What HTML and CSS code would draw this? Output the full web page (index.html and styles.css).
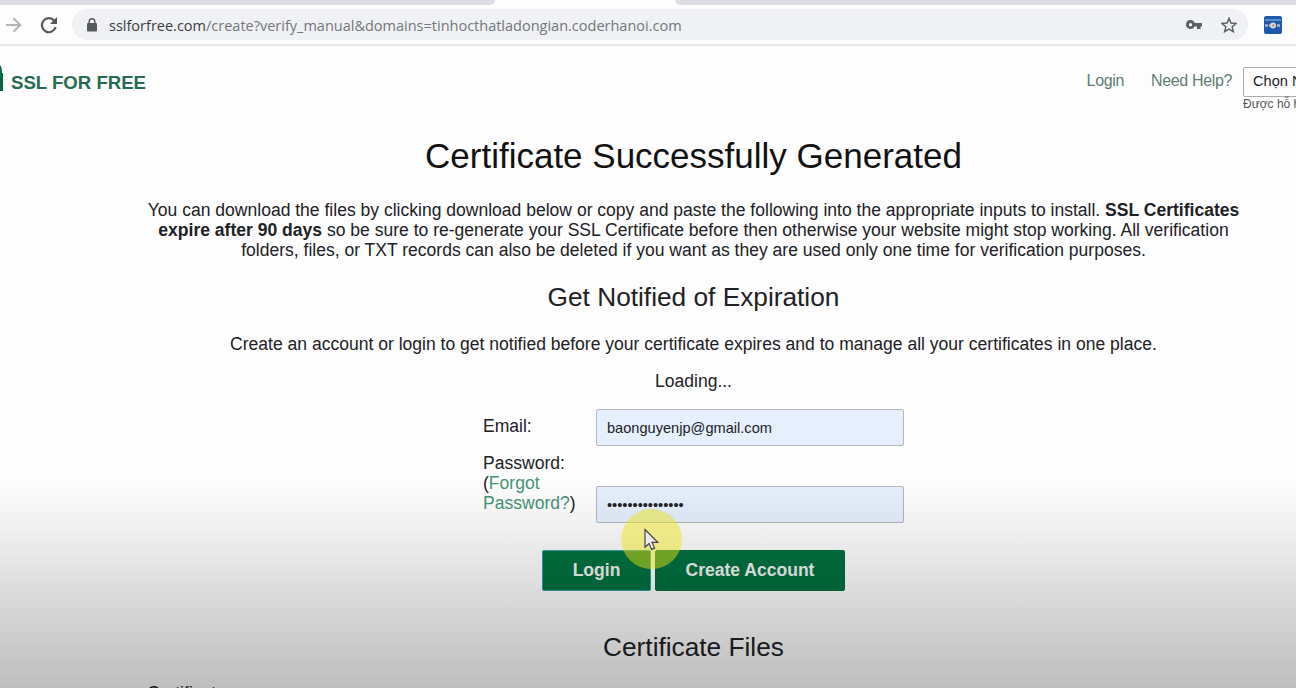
FILE: index.html
```html
<!DOCTYPE html>
<html lang="en">
<head>
<meta charset="utf-8">
<title>SSL For Free</title>
<link rel="stylesheet" href="styles.css">
</head>
<body>
<div class="screen">
  <div class="tabstrip"><div class="tab tab-left"></div><div class="tab tab-right"></div></div>
  <div class="toolbar">
    <svg class="forward" width="18" height="18" viewBox="0 0 18 18"><path d="M1 9h14M8.500 2.200L15.300 9l-6.800 6.800" fill="none" stroke="#b4b5b7" stroke-width="2"/></svg>
    <svg class="reload" width="18" height="18" viewBox="0 0 18 18"><path d="M14.300 4.700A7 7 0 1 0 15.700 11" fill="none" stroke="#55585b" stroke-width="2.200"/><path d="M17 1v7h-7z" fill="#55585b"/></svg>
    <div class="omnibox">
      <svg class="lock" width="10" height="14" viewBox="0 0 10 14"><path d="M2.200 6V3.600a2.800 2.800 0 0 1 5.600 0V6" fill="none" stroke="#57595c" stroke-width="1.500"/><rect y="5" width="10" height="8.500" rx="1" fill="#57595c"/></svg>
      <span class="url"><span class="host">sslforfree.com</span>/create?verify_manual&amp;domains=tinhocthatladongian.coderhanoi.com</span>
      <svg class="key" width="16" height="10" viewBox="0 0 16 10"><path fill-rule="evenodd" d="M4.500 0a4.500 4.500 0 0 1 4.200 3H16v3.500h-1.500V9H11V6.500H8.500A4.500 4.500 0 1 1 4.500 0zm0 3a1.700 1.700 0 1 0 0 3.400 1.700 1.700 0 0 0 0-3.400z" fill="#5c5f62"/></svg>
      <svg class="star" width="16" height="16" viewBox="0 0 16 16"><path d="M8 1.400l1.950 4.650 5.050.45-3.830 3.300 1.150 4.900L8 12.100l-4.320 2.600 1.150-4.900L1 6.500l5.050-.45z" fill="none" stroke="#5f6265" stroke-width="1.500"/></svg>
    </div>
    <svg class="extension" width="18" height="18" viewBox="0 0 18 18"><rect width="18" height="18" rx="2" fill="#1d5aad"/><path d="M1 4h16" stroke="#7eb5e9" stroke-width="1.200"/><path d="M1 9.500h16" stroke="#9eb7d5" stroke-width="2.500" stroke-dasharray="3 1"/><circle cx="9" cy="9.500" r="3" fill="#ddd5d3"/><circle cx="9.300" cy="9.500" r="1.200" fill="#b79584"/></svg>
  </div>
  <div class="site-header">
    <svg class="brand-lock" width="3" height="29" viewBox="0 0 3 29"><path d="M0 1q2 2 2 8H3v18H0z" fill="#076a42"/></svg>
    <span class="brand">SSL FOR FREE</span>
    <a class="nav login-link">Login</a>
    <a class="nav">Need Help?</a>
    <div class="language"><div class="select">Chọn Ngôn ngữ</div><div class="powered">Được hỗ hỗ trợ bởi</div></div>
  </div>
  <main class="content">
    <h1>Certificate Successfully Generated</h1>
    <p class="intro"><span class="line">You can download the files by clicking download below or copy and paste the following into the appropriate inputs to install. <b>SSL Certificates</b></span><span class="line"><b>expire after 90 days</b> so be sure to re-generate your SSL Certificate before then otherwise your website might stop working. All verification</span><span class="line">folders, files, or TXT records can also be deleted if you want as they are used only one time for verification purposes.</span></p>
    <h2>Get Notified of Expiration</h2>
    <p class="sub">Create an account or login to get notified before your certificate expires and to manage all your certificates in one place.</p>
    <p class="loading">Loading...</p>
    <form class="form">
      <label class="email-label">Email:</label>
      <input class="field" type="text" value="baonguyenjp@gmail.com">
      <label class="password-label">Password:<br>(<a>Forgot<br>Password?</a>)</label>
      <input class="field password" type="password" value="123456789012345">
    </form>
    <div class="actions"><button class="btn btn-login">Login</button><button class="btn btn-create">Create Account</button></div>
    <h2 class="files-title">Certificate Files</h2>
    <div class="cert-label">Certificate:</div>
  </main>
  <div class="shade"></div>
  <div class="click-halo"></div>
  <svg class="cursor" width="15" height="23" viewBox="0 0 15 23"><path d="M1 1.500v17.800l4-3.700 2.600 5.800 3-1.300L8 14.300h5.700z" fill="#eeedf2" stroke="#45434b" stroke-width="1.200"/></svg>
</div>
</body>
</html>
```
FILE: styles.css
```css
* { box-sizing: border-box; }
body { margin: 0; background: #fefdfe; font-family: "Liberation Sans", Arial, sans-serif; color: #202124; }
.screen { position: relative; width: 1296px; height: 688px; overflow: hidden; white-space: nowrap; }
.tabstrip { display: flex; justify-content: space-between; height: 5px; }
.tab { background: #dddee3; }
.tab-left { width: 495px; border-bottom-right-radius: 5px; }
.tab-right { width: 621px; border-bottom-left-radius: 5px; }
.toolbar { display: flex; align-items: center; height: 41px; padding: 0 14px 0 5px; border-bottom: 2px solid #e8e8ea; }
.forward { margin-right: 17px; }
.omnibox { display: flex; align-items: center; width: 1176px; height: 31px; margin-left: 14px; padding: 0 11px 0 15px; border-radius: 16px; background: #f0f1f4; }
.url { flex: 1; margin-left: 12px; padding-top: 1px; font: 14.5px/21px "Open Sans", sans-serif; color: #73777a; }
.host { color: #3a3d40; }
.key { margin-right: 19px; }
.extension { margin-left: 16px; }
.site-header { display: flex; align-items: flex-start; height: 84px; padding-top: 18px; }
.brand { margin: 8px auto 0 8px; font-weight: bold; font-size: 18.6px; line-height: 22px; color: #276c51; }
.nav { margin: 6px 12px 0 0; font-size: 16px; letter-spacing: -.35px; line-height: 21px; color: #5d7d70; }
.login-link { margin-right: 27px; }
.language { width: 53px; overflow: hidden; padding-top: 3px; margin-left: -1px; }
.select { width: 120px; height: 30px; padding-left: 9px; border: 1px solid #aaa; border-radius: 2px; font-size: 14.6px; line-height: 27px; }
.powered { font-size: 12px; line-height: 15px; color: #555; }
.content { width: 1107px; margin-left: 140px; text-align: center; font-size: 17.55px; }
h1, h2, p { margin: 0; font-weight: normal; }
h1 { height: 70px; font-size: 35px; line-height: 52px; color: #111; }
.intro { height: 70px; line-height: 20px; }
.line { display: flex; justify-content: center; white-space: pre; }
h2 { height: 54px; font-size: 26.25px; line-height: 54px; }
.sub { height: 39px; line-height: 40px; }
.loading { height: 38px; line-height: 37px; }
.form { display: grid; grid-template-columns: 114px 307px; width: 421px; height: 141px; margin: 8px 0 0 342px; grid-template-rows: 37px 1fr; row-gap: 7px; text-align: left; line-height: 20px; }
.email-label { padding: 7px 0 0 1px; }
.password-label { padding-left: 1px; }
.field { width: 308px; height: 37px; padding: 0 10px; border: 1px solid #b5b7bc; border-radius: 2px; background: #e5effd; font: 14.6px "Liberation Sans", sans-serif; color: #202124; outline: 0; }
.password { margin-top: 33px; }
.form a { color: #459473; }
.actions { display: flex; gap: 4px; height: 41px; margin-left: 402px; }
.btn { height: 41px; padding: 0; border: 1px solid #006b3d; border-radius: 2px; background: #00713f; font: bold 17.55px "Liberation Sans", sans-serif; color: #f0f2ef; }
.btn-login { width: 109px; border-color: #2d9eaa; }
.btn-create { width: 190px; }
.files-title { height: 92px; padding-top: 29px; }
.cert-label { line-height: 20px; text-align: left; padding-left: 7px; }
.shade { position: absolute; left: 0; right: 0; bottom: 0; height: 208px; background: linear-gradient(rgba(0,0,0,0), rgba(0,0,0,.055) 24%, rgba(0,0,0,.15) 60%, rgba(0,0,0,.25)); pointer-events: none; }
.click-halo { position: absolute; left: 621px; top: 509px; width: 61px; height: 60px; border-radius: 50%; background: rgba(235,228,20,.47); }
.cursor { position: absolute; left: 644px; top: 528px; }
```
